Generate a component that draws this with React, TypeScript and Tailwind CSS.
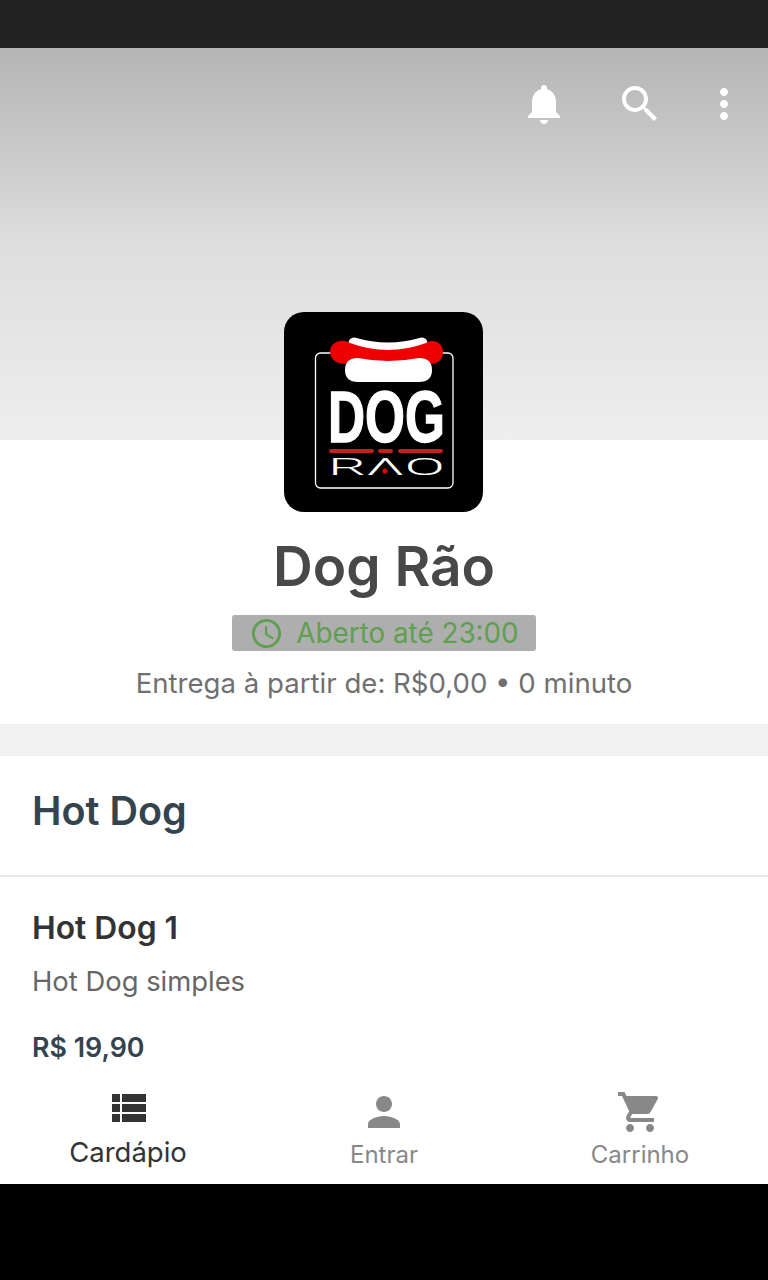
const PATHS = {
  bell: 'M12 22c1.1 0 2-.9 2-2h-4c0 1.1.89 2 2 2zm6-6v-5c0-3.07-1.64-5.64-4.5-6.32V4c0-.83-.67-1.5-1.5-1.5s-1.5.67-1.5 1.5v.68C7.63 5.36 6 7.92 6 11v5l-2 2v1h16v-1l-2-2z',
  search: 'M15.5 14h-.79l-.28-.27C15.41 12.59 16 11.11 16 9.5 16 5.91 13.09 3 9.5 3S3 5.91 3 9.5 5.91 16 9.5 16c1.61 0 3.09-.59 4.23-1.57l.27.28v.79l5 4.99L20.49 19l-4.99-5zm-6 0C7.01 14 5 11.99 5 9.5S7.01 5 9.5 5 14 7.01 14 9.5 11.99 14 9.5 14z',
  more: 'M12 8c1.1 0 2-.9 2-2s-.9-2-2-2-2 .9-2 2 .9 2 2 2zm0 2c-1.1 0-2 .9-2 2s.9 2 2 2 2-.9 2-2-.9-2-2-2zm0 6c-1.1 0-2 .9-2 2s.9 2 2 2 2-.9 2-2-.9-2-2-2z',
  clock: 'M11.99 2C6.47 2 2 6.48 2 12s4.47 10 9.99 10C17.52 22 22 17.52 22 12S17.52 2 11.99 2zM12 20c-4.42 0-8-3.58-8-8s3.58-8 8-8 8 3.58 8 8-3.58 8-8 8zm.5-13H11v6l5.25 3.15.75-1.23-4.5-2.67z',
  list: 'M4 14h4v-4H4v4zm0 5h4v-4H4v4zM4 9h4V5H4v4zm5 5h12v-4H9v4zm0 5h12v-4H9v4zM9 5v4h12V5H9z',
  person: 'M12 12c2.21 0 4-1.79 4-4s-1.79-4-4-4-4 1.79-4 4 1.79 4 4 4zm0 2c-2.67 0-8 1.34-8 4v2h16v-2c0-2.66-5.33-4-8-4z',
  cart: 'M7 18c-1.1 0-1.99.9-1.99 2S5.9 22 7 22s2-.9 2-2-.9-2-2-2zM1 2v2h2l3.6 7.59-1.35 2.45c-.16.28-.25.61-.25.96 0 1.1.9 2 2 2h12v-2H7.42c-.14 0-.25-.11-.25-.25l.03-.12.9-1.63h7.45c.75 0 1.41-.41 1.75-1.03l3.58-6.47c.08-.14.12-.31.12-.48 0-.55-.45-1-1-1H5.21l-.94-2H1zm16 16c-1.1 0-1.99.9-1.99 2s.89 2 1.99 2 2-.9 2-2-.9-2-2-2z',
}

function Icon({ d, className }: { d: string; className?: string }) {
  return (
    <svg viewBox="0 0 24 24" fill="currentColor" className={className}>
      <path d={d} />
    </svg>
  )
}

function Logo() {
  return (
    <svg viewBox="0 0 199 200" className="relative block w-[199px] h-[200px] ml-[284px] -mt-[128px]">
      <rect width="199" height="200" rx="20" fill="#000" />
      <rect x="31.5" y="41" width="137.5" height="135" rx="5" fill="none" stroke="#fff" strokeWidth="1.3" />
      <path d="M70 31 Q104 41 138 31" fill="none" stroke="#fff" strokeWidth="11" strokeLinecap="round" />
      <path d="M46 40 C46 30 58 26 66 31 Q104 45 142 31 C150 26 159 31 159 40 C159 49 150 55 142 50 Q104 50 66 50 C58 55 46 49 46 40Z" fill="#ee0000" />
      <path d="M74 46 Q104 52 135 46 Q148 46 148 58 Q148 70 135 70 L74 70 Q61 70 61 58 Q61 46 74 46Z" fill="#fff" />
      <text x="44" y="130" textLength="117" lengthAdjust="spacingAndGlyphs" fontFamily="'Liberation Sans', sans-serif" fontWeight="700" fontSize="72" fill="#fff" stroke="#fff" strokeWidth="1.4">DOG</text>
      <rect x="45" y="137" width="45" height="4" rx="2" fill="#c81e1e" />
      <rect x="94" y="137" width="15" height="4" rx="2" fill="#c81e1e" />
      <rect x="114" y="137" width="45" height="4" rx="2" fill="#c81e1e" />
      <text x="44" y="163" textLength="117" lengthAdjust="spacingAndGlyphs" fontFamily="Roboto, sans-serif" fontWeight="300" fontSize="24" fill="#fff">RΛO</text>
      <circle cx="101" cy="159" r="2.5" fill="#ee0000" />
    </svg>
  )
}

function Tab({ d, label, active }: { d: string; label: string; active?: boolean }) {
  return (
    <div className={active ? 'flex-1 flex flex-col items-center text-[#333]' : 'flex-1 flex flex-col items-center text-[#888] pt-1'}>
      <Icon d={d} className="w-12 h-12" />
      <span className={active ? 'text-[27.5px] leading-[40px]' : 'text-[24px] leading-[38px]'}>{label}</span>
    </div>
  )
}

export default function App() {
  return (
    <div className="w-[768px] h-[1280px] flex flex-col overflow-hidden bg-black font-['Inter',sans-serif]">
      <div className="h-12 shrink-0 bg-[#212121]" />
      <div className="flex-1 min-h-0 relative bg-white overflow-hidden">
        <div className="h-[392px] bg-gradient-to-b from-[#b4b4b4] via-[#dedede] via-50% to-[#eeeeee] flex justify-end items-start pt-8 pr-5 text-white">
          <Icon d={PATHS.bell} className="w-12 h-12 mr-[48px]" />
          <Icon d={PATHS.search} className="w-12 h-12 mr-[36px]" />
          <Icon d={PATHS.more} className="w-12 h-12" />
        </div>
        <Logo />
        <div className="flex flex-col items-center h-[212px]">
          <h1 className="text-[55px] leading-[64px] mt-[22px] font-semibold text-[#484848]">Dog Rão</h1>
          <div className="w-[304px] h-9 mt-[17px] rounded-[3px] bg-[#aeaeae] flex items-center justify-center gap-3 text-[#5f9f50]">
            <Icon d={PATHS.clock} className="w-[35px] h-[35px]" />
            <span className="text-[27.8px] leading-9">Aberto até 23:00</span>
          </div>
          <p className="text-[27.6px] leading-9 mt-[14px] text-[#707070]">Entrega à partir de: R$0,00 • 0 minuto</p>
        </div>
        <div className="h-8 bg-[#f1f1f1]" />
        <div className="h-[121px] pl-8 pb-2 flex items-center border-b-2 border-[#e6e6e6]">
          <h2 className="text-[39.5px] font-semibold text-[#34444f]">Hot Dog</h2>
        </div>
        <div className="px-8 pt-[33px]">
          <h3 className="text-[31.8px] leading-9 font-semibold text-[#333]">Hot Dog 1</h3>
          <p className="text-[27.4px] leading-9 mt-[17px] text-[#666]">Hot Dog simples</p>
          <p className="text-[26.8px] leading-9 mt-[30px] font-semibold text-[#34444f]">R$ 19,90</p>
        </div>
        <div className="absolute bottom-0 left-0 right-0 h-[100px] bg-white flex">
          <Tab d={PATHS.list} label="Cardápio" active />
          <Tab d={PATHS.person} label="Entrar" />
          <Tab d={PATHS.cart} label="Carrinho" />
        </div>
      </div>
      <div className="h-24 shrink-0 bg-black" />
    </div>
  )
}
